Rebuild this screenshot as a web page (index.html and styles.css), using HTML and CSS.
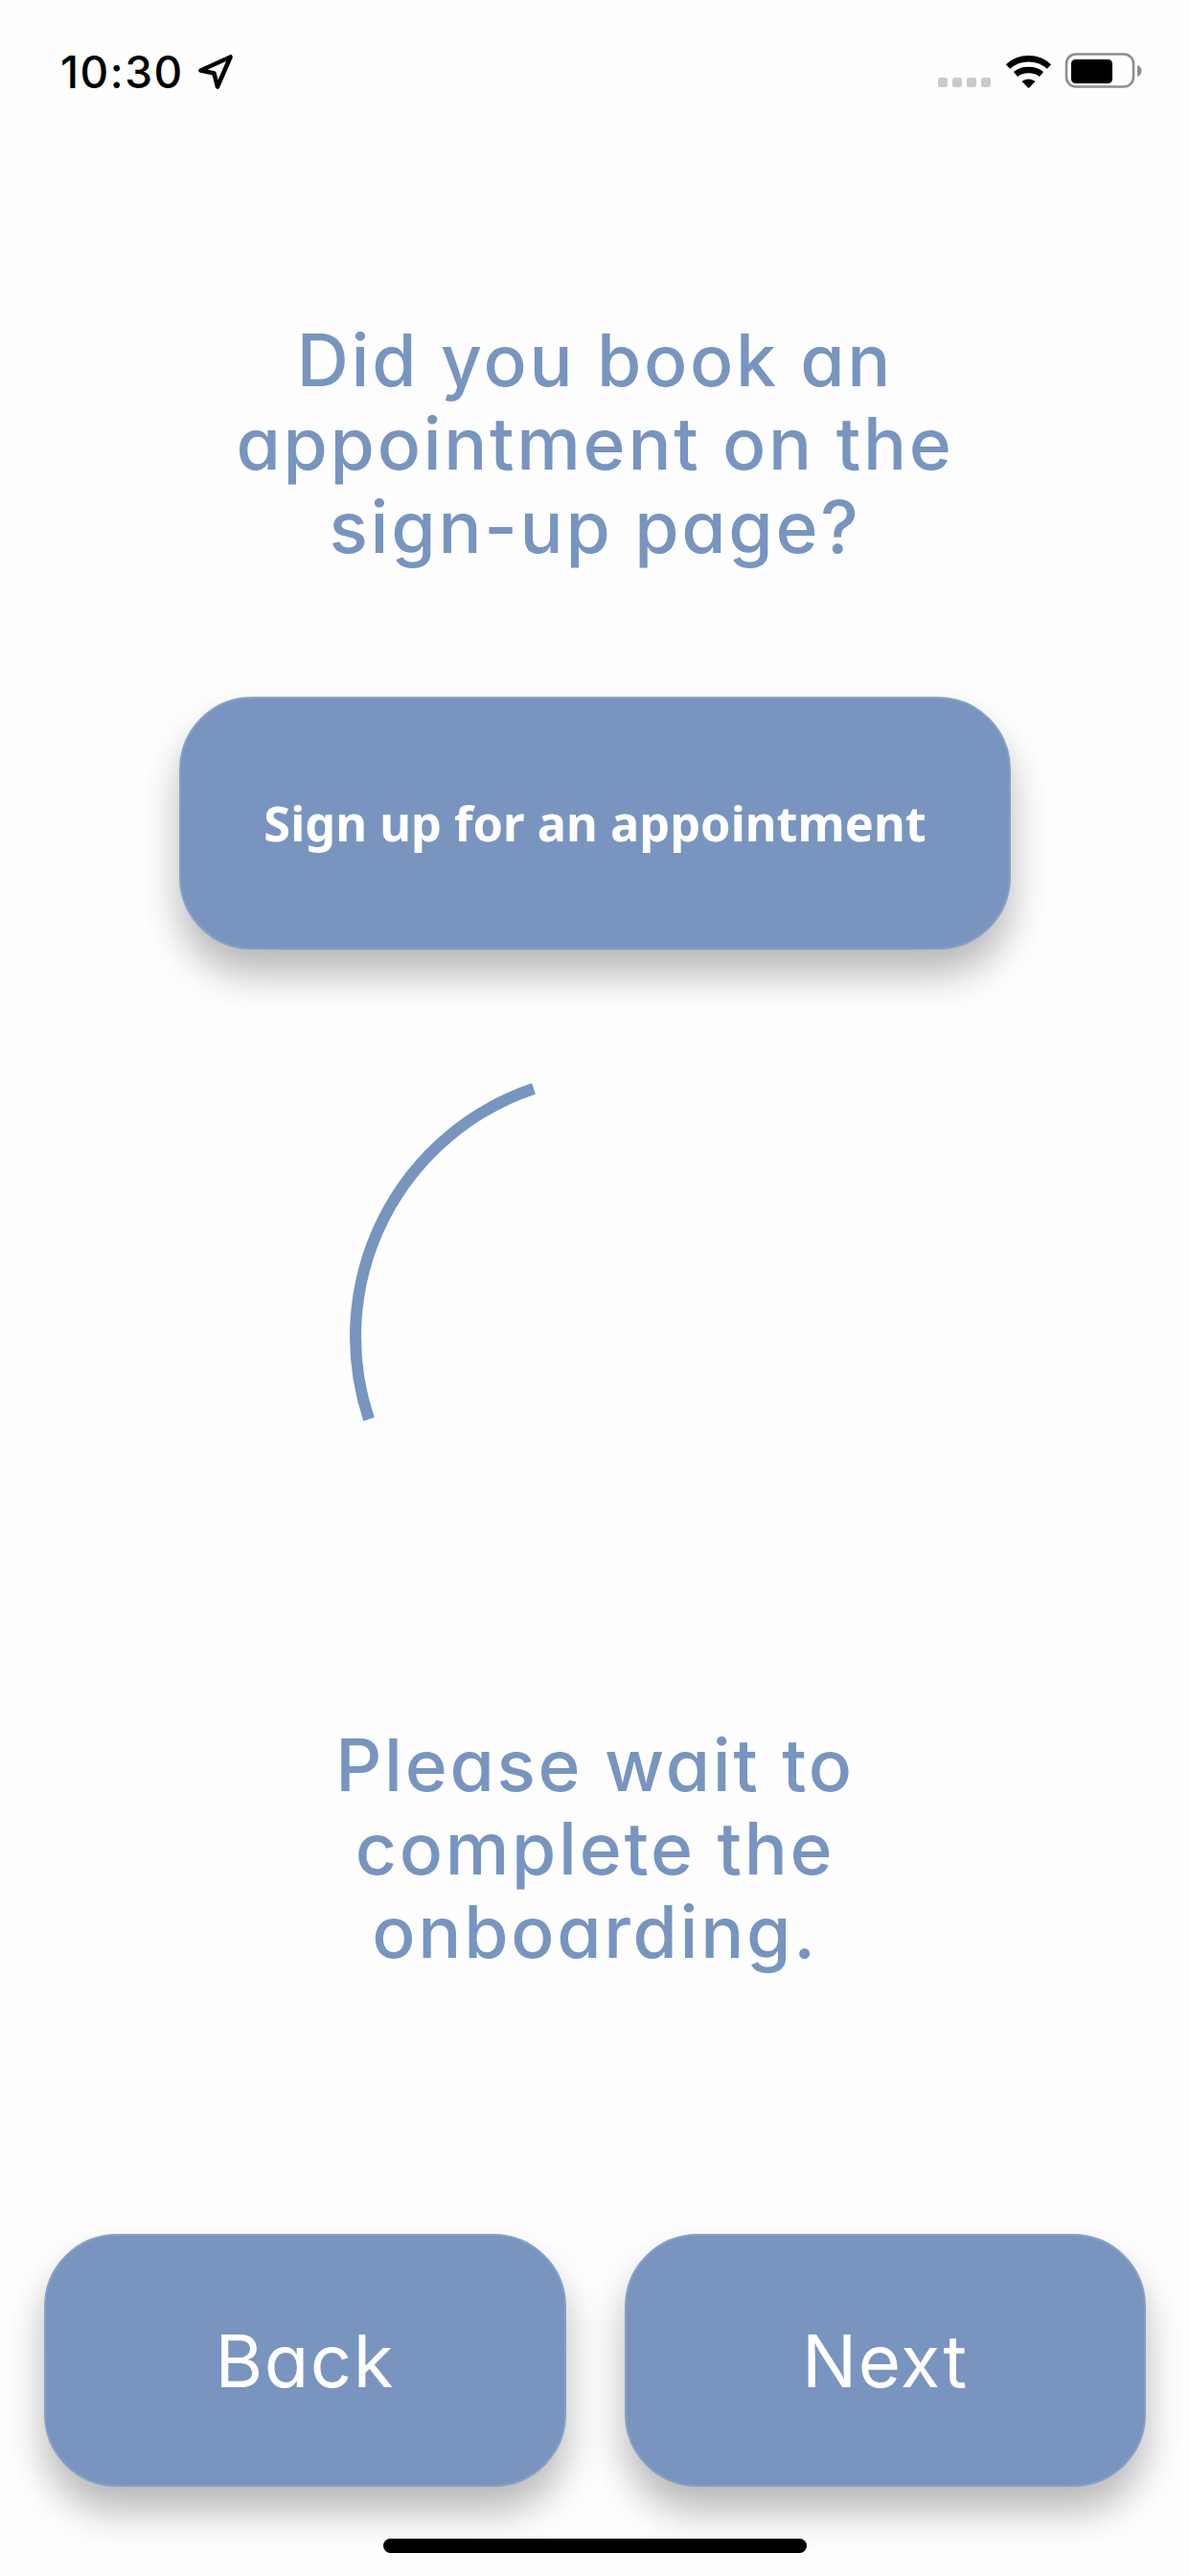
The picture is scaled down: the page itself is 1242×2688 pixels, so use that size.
FILE: index.html
```html
<!DOCTYPE html>
<html lang="en">
<head>
<meta charset="utf-8">
<title>Onboarding</title>
<link rel="stylesheet" href="styles.css">
</head>
<body>
<div class="screen">
  <header class="status">
    <div class="status-left">
      <span class="time">10:30</span>
      <svg class="loc" viewBox="0 0 36 36" width="36" height="36"><path d="M2.500 16.500 33.500 2.500 20 33.500 16.500 19.500Z" fill="none" stroke="#000" stroke-width="4.600" stroke-linejoin="round"/></svg>
    </div>
    <svg class="status-right" viewBox="0 0 213 38" width="213" height="38">
      <g fill="#cacaca">
        <rect x="0" y="26" width="10" height="10" rx="2.500"/>
        <rect x="15" y="26" width="10" height="10" rx="2.500"/>
        <rect x="30" y="26" width="10" height="10" rx="2.500"/>
        <rect x="45" y="26" width="10" height="10" rx="2.500"/>
      </g>
      <g fill="none" stroke="#000" stroke-width="6.400">
        <path d="M73 14.500C85 3.500 104 3.500 116 14.500"/>
        <path d="M81 22.500C88 16.500 101 16.500 108 22.500"/>
      </g>
      <path d="M87.500 30C91.500 26.500 97.500 26.500 101.500 30L94.500 37Z" fill="#000"/>
      <rect x="134" y="1.500" width="70" height="34" rx="10" fill="none" stroke="#8e8e8e" stroke-width="2.600"/>
      <rect x="139" y="7" width="43" height="25" rx="4.500" fill="#000"/>
      <path d="M208 13C211 14 212.500 16 212.500 19S211 24 208 25Z" fill="#8e8e8e"/>
    </svg>
  </header>

  <main class="content">
    <h1 class="title title-first">Did you book an<br>appointment on the<br>sign-up page?</h1>
    <button class="btn btn-wide" type="button">Sign up for an appointment</button>
    <svg class="spinner" viewBox="0 0 240 400" width="240" height="400">
      <path d="M217 35A273 273 0 0 0 45 380" fill="none" stroke="#7795bf" stroke-width="12"/>
    </svg>
    <h2 class="title title-second">Please wait to<br>complete the<br>onboarding.</h2>
  </main>

  <nav class="nav">
    <button class="btn btn-nav" type="button">Back</button>
    <button class="btn btn-nav" type="button">Next</button>
  </nav>
  <div class="home-wrap"><div class="home"></div></div>
</div>
</body>
</html>
```
FILE: styles.css
```css
* { box-sizing: border-box; }
html, body { margin: 0; padding: 0; }
body { width: 1242px; height: 2688px; background: #fefefe; overflow: hidden; }
.screen { width: 1242px; height: 2688px; display: flex; flex-direction: column; }

.status { height: 132px; padding: 55px 50px 0 63px; display: flex; justify-content: space-between; align-items: flex-start; }
.status-left { display: flex; align-items: center; gap: 15px; height: 38px; margin-top: 1px; }
.time { font-family: Inter, "Liberation Sans", sans-serif; font-weight: 500; font-size: 46px; line-height: 38px; color: #000; letter-spacing: 1.500px; }
.loc { display: block; }
.status-right { display: block; }

.content { flex: 1; display: flex; flex-direction: column; align-items: center; }
.title { margin: 0; font-family: Inter, "Noto Sans", sans-serif; font-feature-settings: "cv11" 1; font-weight: 450; font-size: 75px; line-height: 87px; color: #7795bf; text-align: center; letter-spacing: 2.700px; }
.title-first { margin-top: 200px; }
.title-second { margin-top: 297px; }

.btn { display: flex; align-items: center; justify-content: center; padding: 0; color: #fff; background: #7995bf; border: 2px solid #86a0c6; border-radius: 76px; box-shadow: 0 26px 40px rgba(0, 0, 0, 0.28); cursor: pointer; }
.btn-wide { margin-top: 134px; width: 868px; height: 264px; font-family: "Noto Sans", sans-serif; font-weight: 700; font-size: 50.500px; line-height: 60px; }
.spinner { display: block; margin-top: 110px; align-self: flex-start; margin-left: 340px; }

.nav { display: flex; gap: 61px; padding: 0 46px; }
.btn-nav { width: 545px; height: 264px; font-family: Inter, "Noto Sans", sans-serif; font-feature-settings: "cv11" 1; font-weight: 400; font-size: 76px; letter-spacing: 1.500px; }

.home-wrap { display: flex; justify-content: center; padding: 54px 0 24px; }
.home { width: 442px; height: 15px; border-radius: 8px; background: #000; }
```
